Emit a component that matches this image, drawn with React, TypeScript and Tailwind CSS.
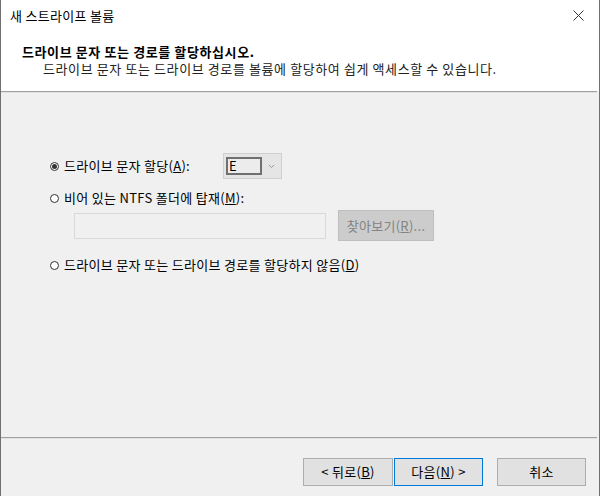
import { useState } from 'react';

const font = "font-['Noto_Sans_CJK_KR','Malgun_Gothic',sans-serif]";

function Radio({ checked, onClick, children }: { checked: boolean; onClick: () => void; children: React.ReactNode }) {
  return (
    <div className="flex items-center h-[16px] cursor-default" onClick={onClick}>
      <span className="w-[9px] h-[9px] rounded-full border border-[#333] flex items-center justify-center bg-white mr-[5px]">
        {checked && <span className="w-[5px] h-[5px] rounded-full bg-[#333]" />}
      </span>
      <span>{children}</span>
    </div>
  );
}

export default function App() {
  const [choice, setChoice] = useState(0);

  return (
    <div className={`w-[600px] h-[496px] flex flex-col bg-[#f0f0f0] border-x border-[#707070] text-[13px] leading-[16px] tracking-[0.3px] text-black ${font}`}>
      {/* title bar */}
      <div className="h-[31px] bg-white flex items-center justify-between pl-[9px] pr-[15px]">
        <span>새 스트라이프 볼륨</span>
        <svg width="11" height="11" viewBox="0 0 11 11" className="text-[#333]">
          <path d="M0.5 0.5 L10.5 10.5 M10.5 0.5 L0.5 10.5" stroke="currentColor" strokeWidth="1" />
        </svg>
      </div>

      {/* header */}
      <div className="h-[60px] bg-white pl-[21px] pt-[13px] tracking-[0.6px]">
        <div className="font-bold">드라이브 문자 또는 경로를 할당하십시오.</div>
        <div className="pl-[21px] pt-[1px] text-[#222]">
          드라이브 문자 또는 드라이브 경로를 볼륨에 할당하여 쉽게 액세스할 수 있습니다.
        </div>
      </div>
      <div className="h-[1px] bg-[#a0a0a0] mr-[2px]" />
      <div className="h-[1px] bg-[#e3e3e3] mr-[2px]" />

      {/* body */}
      <div className="flex-1 pl-[49px] pt-[60px]">
        <div className="flex items-center h-[26px]">
          <div className="w-[173px]">
            <Radio checked={choice === 0} onClick={() => setChoice(0)}>
              드라이브 문자 할당(<u>A</u>):
            </Radio>
          </div>
          <div className="w-[59px] h-[26px] border border-[#d0d0d0] bg-[#e5e5e5] flex items-center pl-[2px]">
            <div className="w-[36px] h-[18px] border-2 border-[#707070] bg-[#ececec] leading-[14px] pl-[1px]">E</div>
            <svg width="7" height="5" viewBox="0 0 7 5" className="ml-[6px]">
              <path d="M1 1 L3.5 3.5 L6 1" stroke="#9a9a9a" strokeWidth="1" fill="none" />
            </svg>
          </div>
        </div>

        <div className="mt-[11px]">
          <Radio checked={choice === 1} onClick={() => setChoice(1)}>
            비어 있는 NTFS 폴더에 탑재(<u>M</u>):
          </Radio>
        </div>

        <div className="flex items-center mt-[4px] pl-[24px]">
          <div className="w-[252px] h-[26px] border border-[#d9d9d9] bg-[#f0f0f0]" />
          <button
            disabled
            className="ml-[12px] w-[96px] h-[31px] border border-[#bfbfbf] bg-[#cccccc] text-[#838383]"
          >
            찾아보기(<u>R</u>)...
          </button>
        </div>

        <div className="mt-[16px]">
          <Radio checked={choice === 2} onClick={() => setChoice(2)}>
            드라이브 문자 또는 드라이브 경로를 할당하지 않음(<u>D</u>)
          </Radio>
        </div>
      </div>

      {/* footer */}
      <div className="h-[1px] bg-[#a0a0a0] mr-[2px]" />
      <div className="h-[1px] bg-[#e3e3e3] mr-[2px]" />
      <div className="h-[57px] flex justify-end items-start pt-[19px] pr-[13px]">
        <button className="w-[90px] h-[28px] border border-[#adadad] bg-[#e1e1e1]">
          &lt; 뒤로(<u>B</u>)
        </button>
        <button className="ml-[1px] w-[89px] h-[28px] border border-[#0078d7] bg-[#e1e1e1]">
          다음(<u>N</u>) &gt;
        </button>
        <button className="ml-[14px] w-[89px] h-[28px] border border-[#adadad] bg-[#e1e1e1]">
          취소
        </button>
      </div>
    </div>
  );
}
